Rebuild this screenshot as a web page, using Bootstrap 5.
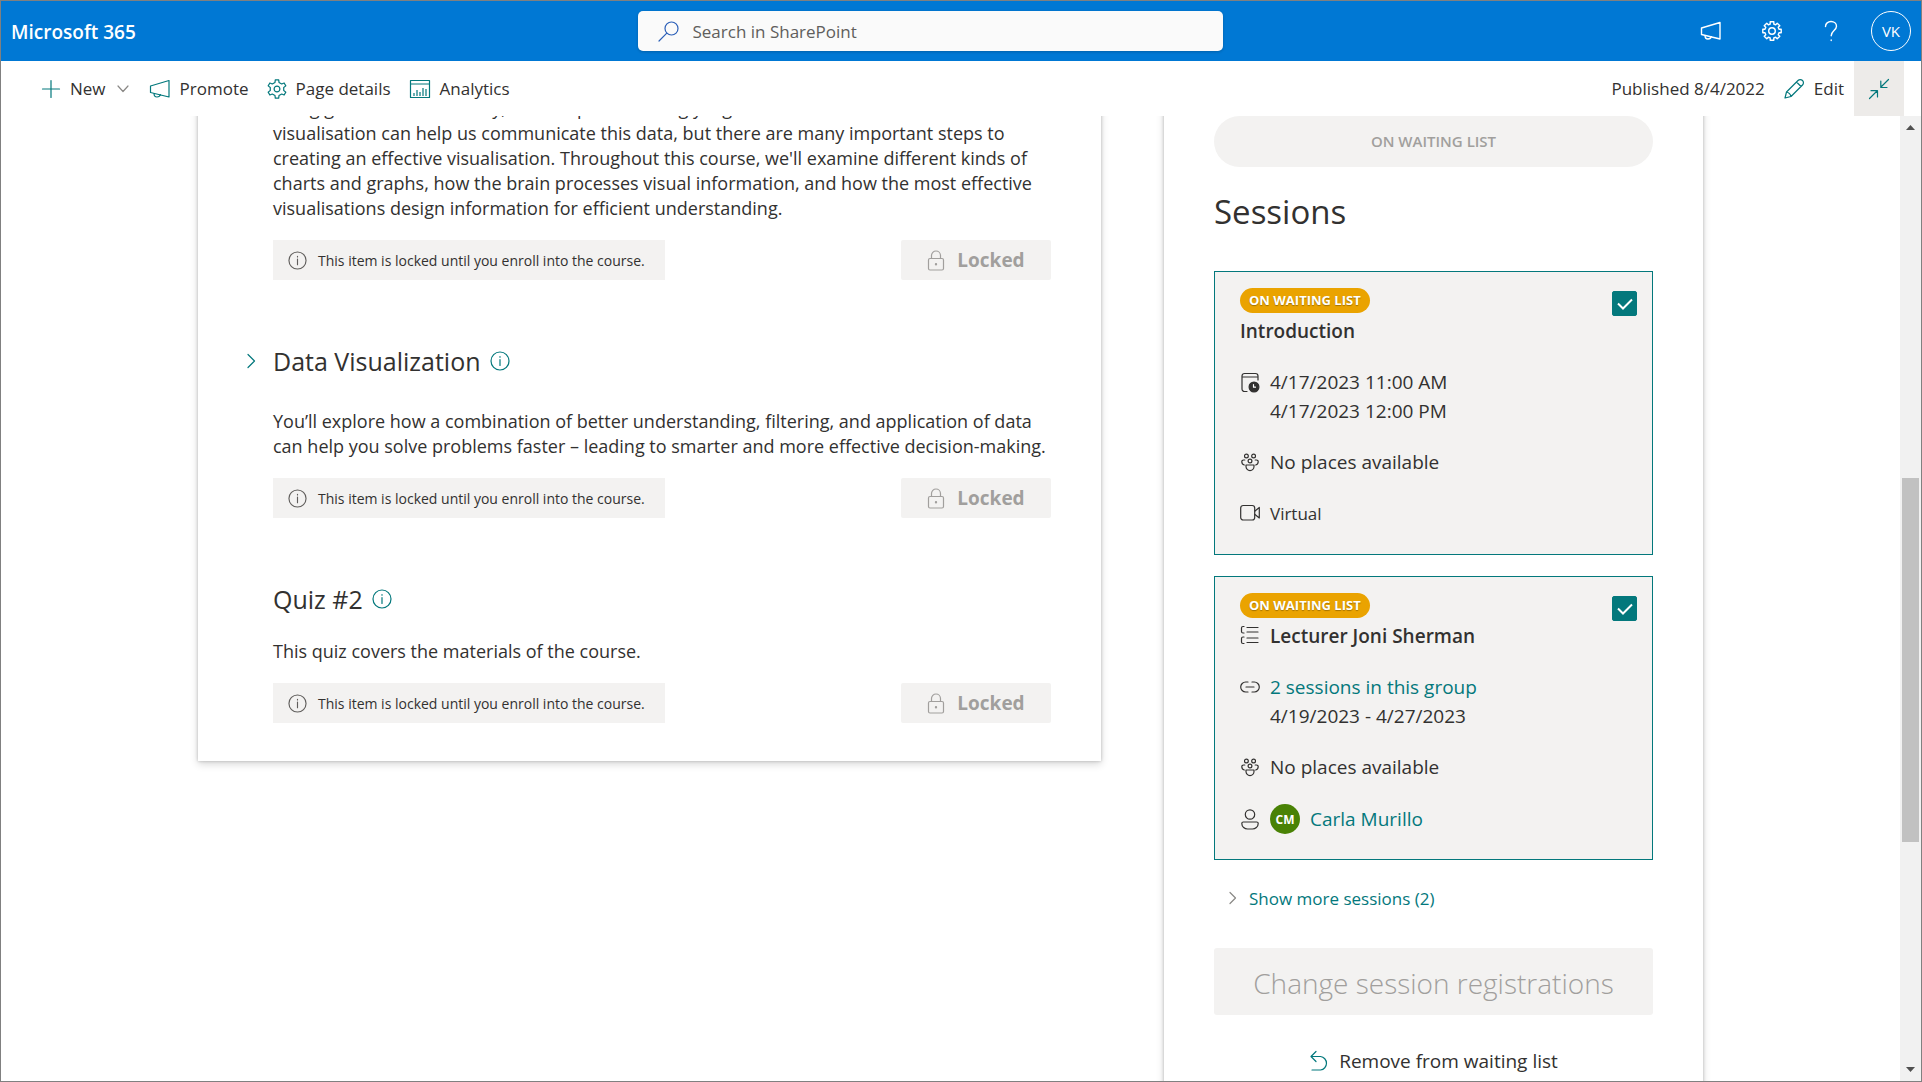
<!DOCTYPE html>
<html lang="en">
<head>
<meta charset="utf-8">
<meta name="viewport" content="width=device-width, initial-scale=1">
<title>Data Visualization course</title>
<link href="https://cdn.jsdelivr.net/npm/bootstrap@5.3.0/dist/css/bootstrap.min.css" rel="stylesheet">
<style>
  :root { --teal: #03787c; --ink: #323130; --soft: #f3f2f1; --muted: #a19f9d; }
  body { font-family: "Open Sans", "Noto Sans", sans-serif; font-size: 18px; line-height: 25px; color: var(--ink); background: #fff; }
  svg { display: block; flex: none; fill: none; stroke: currentColor; stroke-width: 1.2; stroke-linecap: round; stroke-linejoin: round; }
  a { color: var(--teal); text-decoration: none; }
  .shell { height: 100vh; border: 1px solid #808080; }
  .suite { height: 60px; background: #0078d4; color: #fff; padding: 0 10px; }
  .suite .tool svg { stroke-width: 1.4; }
  .brand { flex: 1 1 0; font-size: 19px; font-weight: 600; padding-top: 2px; }
  .account { flex: 1 1 62px; gap: 40px; }
  .finder { width: 585px; height: 40px; background: #fafafa; border-radius: 5px; padding: 0 20px; box-shadow: 0 1px 3px rgba(0,0,0,.2); color: #2b5fb8; }
  .finder input { border: 0; background: none; outline: 0; font-size: 17px; color: #605e5c; margin-left: 14px; }
  .finder input::placeholder { color: #605e5c; opacity: 1; }
  .tool { border: 0; background: none; padding: 0; color: inherit; }
  .teal { color: var(--teal); }
  .me { width: 40px; height: 40px; border: 1px solid #fff; border-radius: 50%; font-size: 15px; margin-left: -9px; }
  .cmds { height: 55px; padding: 0 17px 0 40px; font-size: 17px; background: #fff; gap: 18px; }
  .cmds svg { color: var(--teal); }
  .cmds .tool { gap: 9px; }
  .cmds .caret { color: #8a8886; }
  .collapse-btn { width: 50px; height: 55px; background: #edebe9 !important; margin-left: -8px; }
  .stage { max-width: 1505px; gap: 63px; }
  .panel { background: #fff; margin-top: -20px; box-shadow: 0 3px 8px rgba(0,0,0,.16), 0 0 3px rgba(0,0,0,.22); }
  .course { padding: 0 50px 38px 75px; }
  .course p { margin: 0 0 19px; }
  .course h2 { font-size: 25px; line-height: 34px; font-weight: 400; margin: 0 9px 0 0; }
  .item { margin-top: 64px; }
  .item .intro { margin-top: 31px; }
  .item .brief { margin-top: 23px; }
  .expander { width: 26px; margin-left: -26px; height: 34px; }
  .notice { height: 40px; background: var(--soft); padding: 0 20px 0 15px; gap: 11px; font-size: 14px; color: var(--ink); }
  .notice svg { color: #605e5c; }
  .locked { width: 150px; height: 40px; border: 0; border-radius: 2px; background: var(--soft); color: var(--muted); font-size: 19px; font-weight: 700; gap: 12px; }
  .signup { flex: 0 0 539px; padding: 20px 50px 40px; }
  .pill { height: 51px; border: 0; border-radius: 26px; background: var(--soft); color: var(--muted); font-size: 15px; font-weight: 600; }
  .signup h1 { font-size: 33px; line-height: 46px; font-weight: 400; margin: 22px 0 36px; }
  .session { position: relative; height: 284px; border: 1px solid var(--teal); background: var(--soft); padding: 16px 25px; margin-bottom: 21px; font-size: 19px; line-height: 29px; }
  .tag { display: block; width: fit-content; height: 25px; line-height: 25px; border-radius: 13px; padding: 0 9px; background: #eaa300; color: #fff; font-size: 13px; font-weight: 700; text-shadow: 0 1px 1px rgba(0,0,0,.3); }
  .session h3 { display: flex; gap: 10px; font-size: 19px; line-height: 25px; font-weight: 600; margin: 6px 0 24px; }
  .fact { display: flex; gap: 10px; margin-bottom: 22px; }
  .fact svg { width: 20px; height: 29px; }
  .session .form-check-input { position: absolute; right: 15px; top: 19px; width: 25px; height: 25px; margin: 0; border-radius: 2px; }
  .session .form-check-input:checked { background-color: var(--teal); border-color: var(--teal); background-size: 25px 25px; background-image: url("data:image/svg+xml,%3Csvg xmlns='http://www.w3.org/2000/svg' viewBox='0 0 25 25'%3E%3Cpath d='M6 12.500l5 5 9-9' fill='none' stroke='%23fff' stroke-width='2'/%3E%3C/svg%3E"); }
  .virtual { font-size: 17px; }
  .face { width: 30px; height: 30px; border-radius: 50%; background: #498205; color: #fff; font-size: 12px; font-weight: 700; }
  .more { font-size: 17px; margin: 23px 0 0 13px; gap: 10px; height: 30px; }
  .more svg { color: #8a8886; }
  .session:last-of-type { margin-bottom: 0; }
  .change { height: 67px; border: 0; border-radius: 3px; background: var(--soft); color: var(--muted); font-size: 28px; font-weight: 300; margin-top: 35px; padding-top: 5px; }
  .remove { margin: 32px auto 0; font-size: 19px; line-height: 28px; gap: 10px; }
  .rail { width: 21px; background: #f1f1f1; color: #505050; padding: 9px 2px; }
  .rail svg { stroke: none; fill: currentColor; }
  .grip { background: #c1c1c1; height: 364px; margin-top: 348px; }
</style>
<script src="https://cdn.jsdelivr.net/npm/bootstrap@5.3.0/dist/js/bootstrap.bundle.min.js"></script>
</head>
<body>
<svg width="0" height="0" class="position-absolute" aria-hidden="true">
  <symbol id="info" viewBox="0 0 20 20"><circle cx="10" cy="10" r="9"/><path d="M10 8.500v6M10 5.600v.6"/></symbol>
  <symbol id="lock" viewBox="0 0 18 21"><rect x="1.500" y="8.500" width="15" height="11.500" rx="1.500"/><path d="M4.500 8.500V5.500a4.500 4.500 0 0 1 9 0v3"/><circle cx="9" cy="14.200" r=".6" fill="currentColor"/></symbol>
  <symbol id="horn" viewBox="0 0 22 20"><path d="M1.500 7 20 1.500v16.500L1.500 13.500zM5 14.500c0 2 1 3.500 3 3.500s3-1 3.300-2.300"/></symbol>
  <symbol id="people" viewBox="0 0 20 20"><circle cx="6.400" cy="3.500" r="1.900"/><circle cx="13.600" cy="3.500" r="1.900"/><circle cx="10" cy="8.500" r="1.900"/><path d="M4.800 7.500H3.500a1.700 1.700 0 0 0-1.700 1.700c0 1.600 1 2.800 2.500 3.300M15.200 7.500h1.300a1.700 1.700 0 0 1 1.700 1.700c0 1.600-1 2.800-2.500 3.300M6 12.500h8v1.600a4 4 0 0 1-8 0z"/></symbol>
</svg>

<div class="shell d-flex flex-column overflow-hidden">
  <header class="suite d-flex align-items-center flex-shrink-0">
    <div class="brand">Microsoft 365</div>
    <form class="finder d-flex align-items-center" role="search">
      <svg width="21" height="21" viewBox="0 0 21 21"><circle cx="13.500" cy="7.500" r="6.500"/><path d="M8.800 12.200 1 20"/></svg>
      <input class="flex-grow-1 p-0" type="search" placeholder="Search in SharePoint" aria-label="Search in SharePoint">
    </form>
    <div class="account d-flex justify-content-end align-items-center">
      <button class="tool" aria-label="Announcements"><svg width="22" height="20"><use href="#horn"/></svg></button>
      <button class="tool" aria-label="Settings"><svg width="20" height="20" viewBox="-10 -10 20 20"><path d="M-1.800-7v-2.200h3.600V-7l1.880.78 1.550-1.560 2.550 2.550-1.560 1.550L7-1.800h2.200v3.600H7l-.78 1.880 1.560 1.550-2.550 2.550-1.550-1.560L1.800 7v2.200h-3.600V7l-1.880-.78-1.550 1.560-2.550-2.550 1.560-1.550L-7 1.800h-2.200v-3.600H-7l.78-1.880-1.560-1.550 2.550-2.550 1.550 1.560z"/><circle r="3.300"/></svg></button>
      <button class="tool" aria-label="Help"><svg width="18" height="22" viewBox="0 0 18 22"><path d="M3.500 6.500C3.500 3.500 6 1.500 9 1.500s5.500 2 5.500 4.800c0 4-5.300 4.700-5.300 9.500M9.200 20v.5"/></svg></button>
      <button class="tool me" aria-label="Account manager for VK">VK</button>
    </div>
  </header>

  <nav class="cmds d-flex align-items-center flex-shrink-0" aria-label="Page commands">
    <button class="tool d-flex align-items-center"><svg width="20" height="20" viewBox="0 0 20 20"><path d="M10 1.500v17M1.500 10h17"/></svg>New<svg class="caret" width="16" height="10" viewBox="0 0 16 10"><path d="m3 2 5 5.500L13 2"/></svg></button>
    <button class="tool d-flex align-items-center"><svg width="22" height="20"><use href="#horn"/></svg>Promote</button>
    <button class="tool d-flex align-items-center"><svg width="20" height="20" viewBox="-10 -10 20 20"><path d="m-2-6.600.3-2.600h3.400l.3 2.600 2.720 1.570 2.400-1.040 1.700 2.940-2.100 1.560v3.140l2.100 1.560-1.700 2.940-2.400-1.040L2 6.600l-.3 2.600h-3.400L-2 6.600l-2.720-1.570-2.400 1.040-1.700-2.940 2.100-1.560v-3.140l-2.100-1.560 1.700-2.940 2.400 1.040z"/><circle r="2.900"/></svg>Page details</button>
    <button class="tool d-flex align-items-center"><svg width="22" height="20" viewBox="0 0 22 20"><path stroke-linecap="butt" d="M1.500 1.500h19v17h-19zM1.500 5h19M5 17v-3M8 17v-6M11 17v-4M14 17V9M17 17v-7"/></svg>Analytics</button>
    <span class="ms-auto">Published 8/4/2022</span>
    <button class="tool d-flex align-items-center"><svg width="22" height="22" viewBox="0 0 22 22"><path d="m2 20 1.500-6L15 2.500a3 3 0 0 1 4.500 4.500L8 18.500zM13.500 4l4.500 4.500M3.500 14c2 .5 4 2.300 4.500 4.500"/></svg>Edit</button>
    <button class="tool collapse-btn d-flex align-items-center justify-content-center" aria-label="Collapse"><svg width="22" height="22" viewBox="0 0 22 22"><path d="M20.500 1.500 13 9M12.800 3v6.500H19M1.500 20.500 9 13M3 12.700h6.500V19"/></svg></button>
  </nav>

  <div class="d-flex flex-grow-1 overflow-hidden">
    <main class="flex-grow-1 overflow-hidden">
      <div class="stage d-flex align-items-start mx-auto">
        <section class="panel course flex-grow-1">
          <p>being generated constantly, and shape increasingly big<br>visualisation can help us communicate this data, but there are many important steps to<br>creating an effective visualisation. Throughout this course, we'll examine different kinds of<br>charts and graphs, how the brain processes visual information, and how the most effective<br>visualisations design information for efficient understanding.</p>
          <div class="d-flex justify-content-between">
            <div class="notice d-flex align-items-center"><svg width="19" height="19"><use href="#info"/></svg>This item is locked until you enroll into the course.</div>
            <button class="locked d-flex align-items-center justify-content-center" disabled><svg width="18" height="21"><use href="#lock"/></svg>Locked</button>
          </div>

          <div class="item">
            <div class="d-flex align-items-center">
              <button class="tool teal expander" aria-label="Expand Data Visualization"><svg width="9" height="16" viewBox="0 0 9 16"><path d="m1 1.500 6.500 6.500L1 14.500"/></svg></button>
              <h2>Data Visualization</h2>
              <svg class="teal" width="20" height="20"><use href="#info"/></svg>
            </div>
            <p class="intro">You’ll explore how a combination of better understanding, filtering, and application of data<br>can help you solve problems faster – leading to smarter and more effective decision-making.</p>
            <div class="d-flex justify-content-between">
              <div class="notice d-flex align-items-center"><svg width="19" height="19"><use href="#info"/></svg>This item is locked until you enroll into the course.</div>
              <button class="locked d-flex align-items-center justify-content-center" disabled><svg width="18" height="21"><use href="#lock"/></svg>Locked</button>
            </div>
          </div>

          <div class="item">
            <div class="d-flex align-items-center">
              <h2>Quiz #2</h2>
              <svg class="teal" width="20" height="20"><use href="#info"/></svg>
            </div>
            <p class="brief">This quiz covers the materials of the course.</p>
            <div class="d-flex justify-content-between">
              <div class="notice d-flex align-items-center"><svg width="19" height="19"><use href="#info"/></svg>This item is locked until you enroll into the course.</div>
              <button class="locked d-flex align-items-center justify-content-center" disabled><svg width="18" height="21"><use href="#lock"/></svg>Locked</button>
            </div>
          </div>
        </section>

        <aside class="panel signup">
          <button class="pill w-100 d-block" disabled>ON WAITING LIST</button>
          <h1>Sessions</h1>

          <article class="session">
            <input class="form-check-input" type="checkbox" checked aria-label="Select Introduction">
            <span class="tag">ON WAITING LIST</span>
            <h3>Introduction</h3>
            <div class="fact"><svg viewBox="0 0 20 29"><path d="M7 23.500H4.500a2.500 2.500 0 0 1-2.500-2.500V8a2.500 2.500 0 0 1 2.500-2.500h11A2.500 2.500 0 0 1 18 8v4M2 9h16"/><circle cx="14" cy="19" r="4.900" fill="currentColor"/><path stroke="#fff" d="M13.500 16.500v2.700h2"/></svg><div>4/17/2023 11:00 AM<br>4/17/2023 12:00 PM</div></div>
            <div class="fact"><svg viewBox="0 0 20 20"><use href="#people"/></svg>No places available</div>
            <div class="fact virtual"><svg viewBox="0 0 20 29"><rect x=".7" y="6.500" width="14" height="14.500" rx="2.500"/><path d="m15 12 4.300-3.500v10.500L15 15.500"/></svg>Virtual</div>
          </article>

          <article class="session">
            <input class="form-check-input" type="checkbox" checked aria-label="Select Lecturer Joni Sherman">
            <span class="tag">ON WAITING LIST</span>
            <h3><svg width="20" height="25" viewBox="0 0 20 25"><path d="M7 3.500h11M7 8h11M7 14h11M7 18.500h11M4 2.500H3A1.500 1.500 0 0 0 1.500 4v3.500A1.500 1.500 0 0 0 3 9h1M4 13H3a1.500 1.500 0 0 0-1.500 1.500V18A1.500 1.500 0 0 0 3 19.500h1"/></svg>Lecturer Joni Sherman</h3>
            <div class="fact"><svg viewBox="0 0 20 29"><path d="M8 9H5.700a5 5 0 0 0 0 10H8M12 9h2.300a5 5 0 0 1 0 10H12M6 14h8"/></svg><div><a href="#">2 sessions in this group</a><br>4/19/2023 - 4/27/2023</div></div>
            <div class="fact"><svg viewBox="0 0 20 20"><use href="#people"/></svg>No places available</div>
            <div class="fact align-items-center"><svg viewBox="0 0 20 29"><circle cx="10" cy="9.500" r="4.700"/><path d="M1.800 18.500A1.500 1.500 0 0 1 3.300 17h13.400a1.500 1.500 0 0 1 1.500 1.500c0 3.500-3 5.500-5.700 5.500h-5c-2.700 0-5.700-2-5.700-5.500z"/></svg><span class="face d-flex align-items-center justify-content-center">CM</span><a href="#">Carla Murillo</a></div>
          </article>

          <button class="tool teal more d-flex align-items-center"><svg width="12" height="14" viewBox="0 0 12 14"><path d="m3 1.500 5.500 5.500L3 12.500"/></svg>Show more sessions (2)</button>
          <button class="change w-100 d-block" disabled>Change session registrations</button>
          <button class="tool remove d-flex align-items-center"><svg class="teal" width="20" height="22" viewBox="0 0 20 22"><path d="M7 1.500 2 6.500l5 5M2 6.500h9.500a6.800 6.800 0 0 1 0 13.500H3"/></svg>Remove from waiting list</button>
        </aside>
      </div>
    </main>
    <div class="rail d-flex flex-column flex-shrink-0" aria-hidden="true">
      <svg class="mx-auto" width="9" height="5"><path d="M4.500 0 9 5H0z"/></svg>
      <div class="grip"></div>
      <svg class="mx-auto mt-auto" width="9" height="5"><path d="M0 0h9L4.500 5z"/></svg>
    </div>
  </div>
</div>
</body>
</html>
